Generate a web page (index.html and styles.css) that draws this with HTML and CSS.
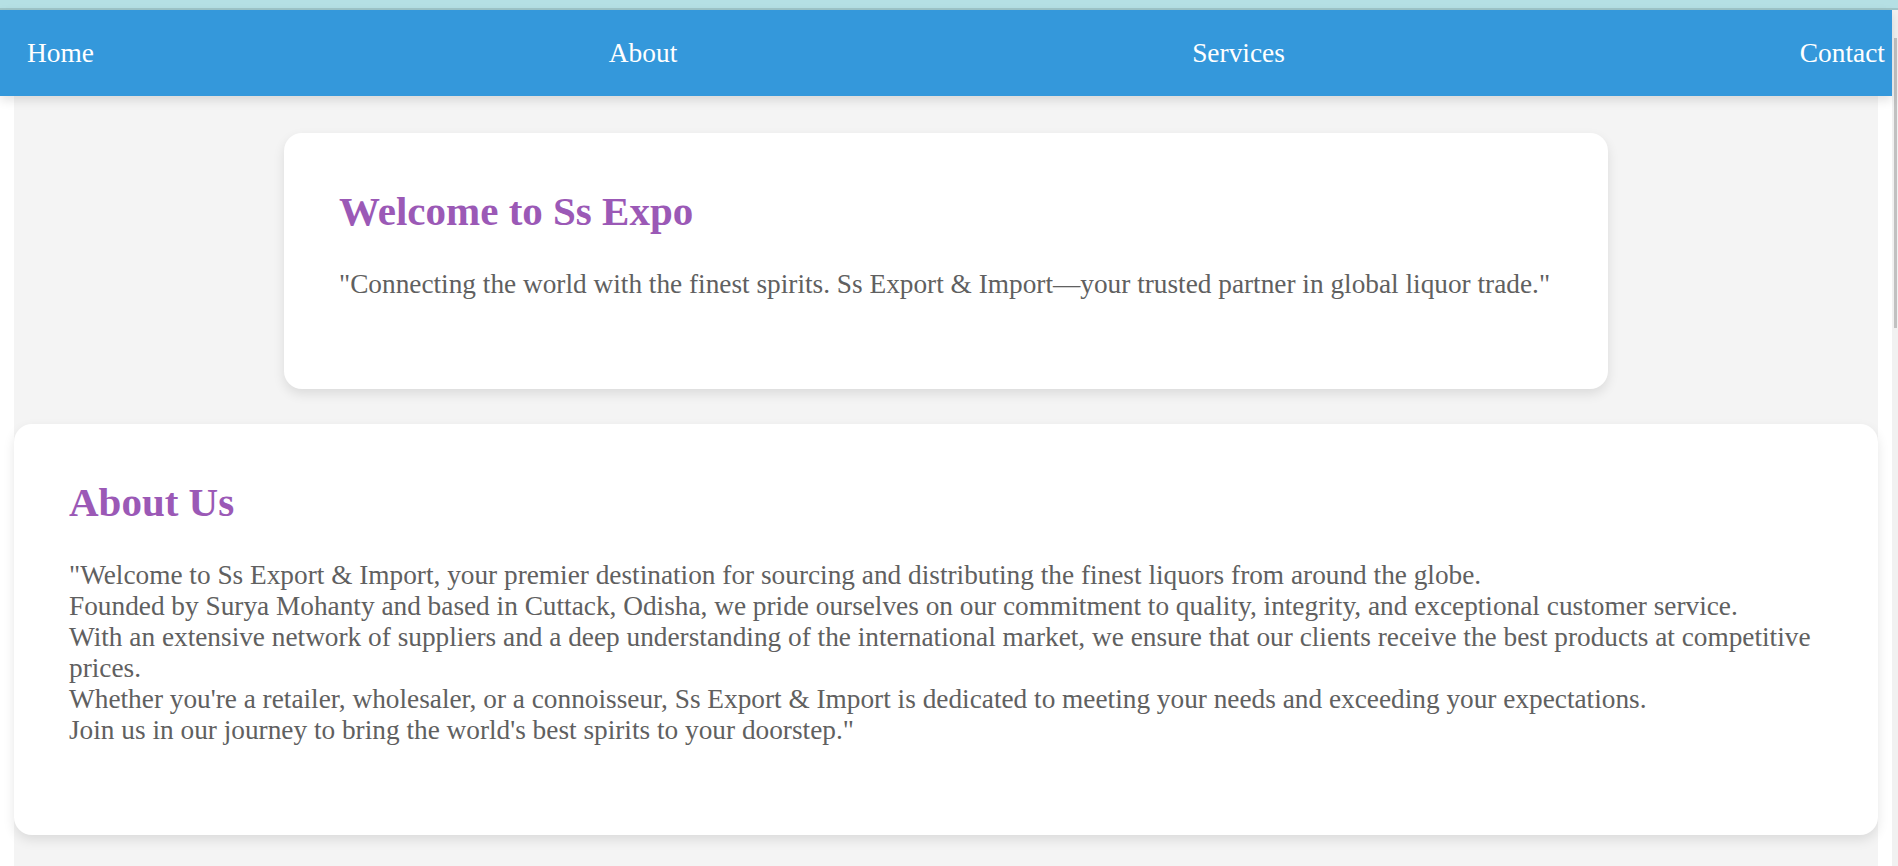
FILE: index.html
```html
<!DOCTYPE html>
<html lang="en">
<head>
<meta charset="utf-8">
<title>Ss Expo</title>
<link rel="stylesheet" href="styles.css">
</head>
<body>
<div class="topstrip"></div>
<div class="frame">
  <div class="page">
    <nav class="nav">
      <a class="nav-link" href="#">Home</a>
      <a class="nav-link" href="#">About</a>
      <a class="nav-link" href="#">Services</a>
      <a class="nav-link" href="#">Contact</a>
    </nav>
    <main class="content">
      <section class="card card-hero">
        <h1 class="card-title">Welcome to Ss Expo</h1>
        <p class="card-text">"Connecting the world with the finest spirits. Ss Export &amp; Import—your trusted partner in global liquor trade."</p>
      </section>
      <section class="card card-about">
        <h2 class="card-title">About Us</h2>
        <p class="card-text">"Welcome to Ss Export &amp; Import, your premier destination for sourcing and distributing the finest liquors from around the globe.<br>Founded by Surya Mohanty and based in Cuttack, Odisha, we pride ourselves on our commitment to quality, integrity, and exceptional customer service.<br>With an extensive network of suppliers and a deep understanding of the international market, we ensure that our clients receive the best products at competitive prices.<br>Whether you're a retailer, wholesaler, or a connoisseur, Ss Export &amp; Import is dedicated to meeting your needs and exceeding your expectations.<br>Join us in our journey to bring the world's best spirits to your doorstep."</p>
      </section>
    </main>
  </div>
  <div class="scrollbar"><div class="scrollbar-thumb"></div></div>
</div>
</body>
</html>
```
FILE: styles.css
```css
html, body {
  margin: 0;
  padding: 0;
  height: 100%;
}
body {
  background: #ffffff;
  font-family: "Liberation Serif", "Times New Roman", serif;
  overflow: hidden;
  display: flex;
  flex-direction: column;
}
.topstrip {
  height: 8px;
  background: #b5e0e4;
  border-bottom: 2px solid #9fc6c9;
  flex: none;
}
.frame {
  flex: 1;
  display: flex;
  min-height: 0;
}
.page {
  flex: 1;
  display: flex;
  flex-direction: column;
  min-width: 0;
}
.nav {
  height: 86px;
  background: #3498db;
  display: flex;
  align-items: center;
  justify-content: space-between;
  padding: 0 7px 0 27px;
  box-shadow: 0 4px 10px rgba(0, 0, 0, 0.12);
  position: relative;
  z-index: 2;
  flex: none;
}
.nav-link {
  color: #ffffff;
  text-decoration: none;
  font-size: 27.4px;
  line-height: 32px;
}
.content {
  flex: 1;
  margin: 0 14px;
  background: #f4f4f4;
  padding-top: 37px;
  display: flex;
  flex-direction: column;
  gap: 35px;
}
.card {
  background: #ffffff;
  border-radius: 18px;
  box-shadow: 0 5px 12px rgba(0, 0, 0, 0.1);
  padding: 54px 55px 89px;
}
.card-hero {
  width: 1324px;
  box-sizing: border-box;
  align-self: center;
}
.card-title {
  margin: 0 0 34px;
  color: #9b59b6;
  font-size: 41px;
  line-height: 48px;
  font-weight: bold;
}
.card-text {
  margin: 0;
  color: #606060;
  font-size: 27.3px;
  line-height: 31px;
}
.scrollbar {
  width: 6px;
  flex: none;
  background: #f1f1f1;
  padding: 28px 1px 0 2px;
  box-sizing: border-box;
}
.scrollbar-thumb {
  height: 290px;
  background: #c1c1c1;
}
```
